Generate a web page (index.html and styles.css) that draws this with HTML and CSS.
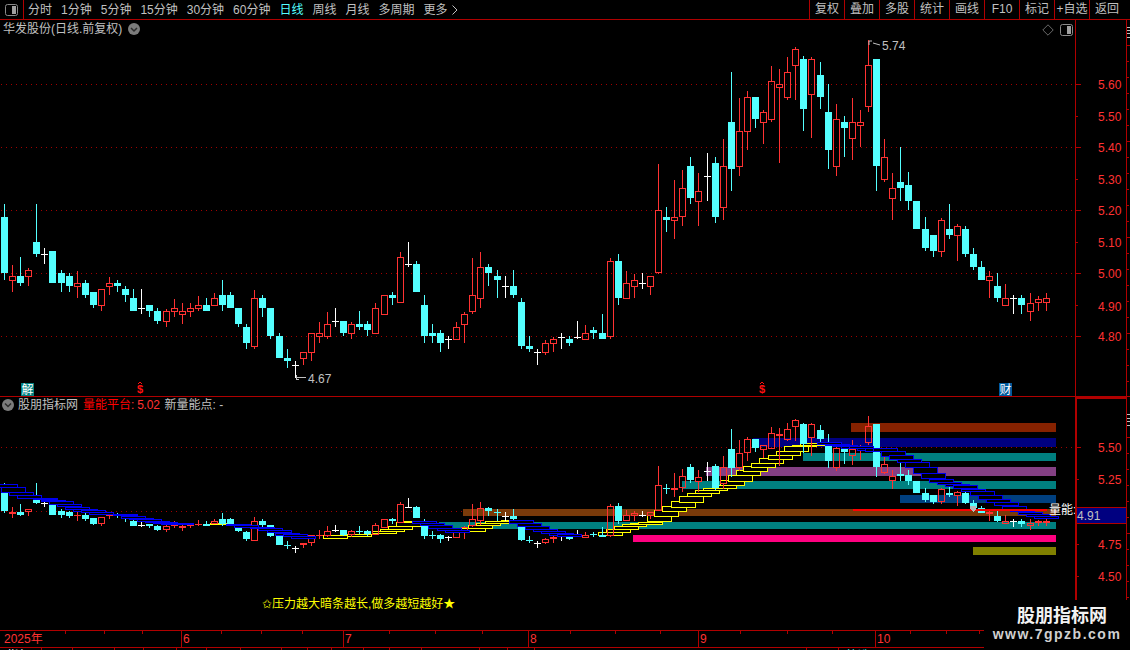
FILE: index.html
```html
<!DOCTYPE html>
<html lang="zh">
<head>
<meta charset="utf-8">
<title>华发股份</title>
<link rel="stylesheet" href="styles.css">
</head>
<body>
<div class="app">
  <header class="toolbar">
    <div class="tb-icon"><svg class="layout-icon" viewBox="0 0 13 12"><rect x="0.5" y="0.5" width="12" height="11" rx="2"/><rect class="fill" x="7" y="2" width="4" height="8"/></svg></div>
    <nav class="periods">
      <span>分时</span><span>1分钟</span><span>5分钟</span><span>15分钟</span><span>30分钟</span><span>60分钟</span><span class="active">日线</span><span>周线</span><span>月线</span><span>多周期</span><span>更多<svg class="more" viewBox="0 0 6 10"><path d="M0.5 0.5 L5 5 L0.5 9.5"/></svg></span>
    </nav>
    <div class="actions">
      <span>复权</span><span>叠加</span><span>多股</span><span>统计</span><span>画线</span><span>F10</span><span>标记</span><span>+自选</span><span>返回</span>
    </div>
  </header>

  <section class="panel upper">
    <svg id="plot-upper" class="plot" width="1075" height="376" viewBox="0 20 1075 376"></svg>
    <svg id="axis-upper" class="axis" width="55" height="376" viewBox="1075 20 55 376"></svg>
    <div class="title">
      <span>华发股份(日线.前复权)</span>
      <svg class="toggle" viewBox="0 0 12 12"><circle cx="6" cy="6" r="6"/><path d="M3 5 L6 8 L9 5"/></svg>
    </div>
    <div class="tools">
      <svg class="diamond" viewBox="0 0 12 12"><path d="M6 0.8 L11.2 6 L6 11.2 L0.8 6 Z"/></svg>
      <svg class="layout-icon" viewBox="0 0 13 12"><rect x="0.5" y="0.5" width="12" height="11" rx="2"/><rect class="fill" x="7" y="2" width="4" height="8"/></svg>
    </div>
  </section>

  <section class="panel lower">
    <svg id="plot-lower" class="plot" width="1075" height="233" viewBox="0 397 1075 233"></svg>
    <svg id="axis-lower" class="axis" width="55" height="233" viewBox="1075 397 55 233"></svg>
    <div class="title lower-title">
      <svg class="toggle" viewBox="0 0 12 12"><circle cx="6" cy="6" r="6"/><path d="M3 4.5 L6 7.5 L9 4.5"/></svg>
      <span>股朋指标网</span>
      <span class="metric"><b>量能平台</b>:&nbsp;5.02</span>
      <span>新量能点: -</span>
    </div>
  </section>

  <svg id="timeline" class="timeline" width="1130" height="16" viewBox="0 630 1130 16"></svg>

  <footer class="tabs">
    <span style="width:42px">指标</span><span style="width:31px"></span><span style="width:42px"></span><span style="width:29px"></span><span style="width:33px"></span><span style="width:30px"></span><span style="width:34px"></span><span style="width:41px"></span><span style="width:26px"></span><span style="width:24px"></span><span style="width:32px"></span><span style="width:26px"></span><span style="width:32px"></span><span style="width:58px"></span><span style="width:28px"></span><span style="width:27px"></span><span style="width:272px"></span><span style="width:32px"></span><span class="cyan" style="width:32px">筛选</span>
  </footer>

  <aside class="watermark">
    <strong>股朋指标网</strong>
    <em>www.7gpzb.com</em>
  </aside>
</div>
<script src="chart.js"></script>
</body>
</html>
```

FILE: styles.css
```css
* { box-sizing: border-box; }
html, body { margin: 0; padding: 0; background: #000; }
body { font: 12px/16px "Liberation Sans", "Noto Sans CJK SC", sans-serif; color: #c0c0c0; }
.app { position: relative; width: 1130px; height: 650px; display: flex; flex-direction: column; overflow: hidden; background: #000; }

.toolbar { display: flex; align-items: stretch; height: 20px; border-bottom: 1px solid #b00000; flex: none; }
.tb-icon { width: 24px; display: flex; align-items: center; justify-content: center; border-right: 1px solid #b00000; }
.layout-icon { width: 13px; height: 12px; display: block; }
.layout-icon rect { fill: none; stroke: #8a8a8a; }
.layout-icon .fill { fill: #a0a0a0; stroke: none; }
.periods { display: flex; gap: 9px; padding-left: 4px; align-items: center; }
.periods .active { color: #54ffff; }
.more { width: 6px; height: 10px; margin-left: 4px; vertical-align: -1px; }
.more path { fill: none; stroke: #c0c0c0; }
.actions { display: flex; margin-left: auto; margin-right: 6px; }
.actions span { width: 35px; text-align: center; border-left: 1px solid #b00000; line-height: 18px; }

.panel { position: relative; display: flex; flex: none; border-bottom: 1px solid #b00000; }
.upper { height: 377px; }
.lower { height: 234px; }
.plot, .axis { display: block; flex: none; shape-rendering: crispEdges; }
.plot text, .axis text { font: 12px "Liberation Sans", "Noto Sans CJK SC", sans-serif; shape-rendering: auto; }
.plot .dollar { font-weight: bold; font-size: 11px; }

.title { position: absolute; left: 3px; top: 1px; display: flex; align-items: center; gap: 6px; line-height: 16px; }
.toggle { width: 12px; height: 12px; display: block; }
.toggle circle { fill: #7c7c7c; }
.toggle path { fill: none; stroke: #2c2c2c; stroke-width: 1.5; }
.lower-title { left: 2px; top: 0; gap: 5px; }
.lower-title .toggle { margin-right: -1px; }
.metric { color: #ff3232; letter-spacing: -0.25px; }
.metric b { font-weight: normal; color: #ff0000; letter-spacing: 0; }

.tools { position: absolute; left: 1042px; top: 4px; display: flex; align-items: center; gap: 6px; }
.diamond { width: 12px; height: 12px; display: block; }
.diamond path { fill: none; stroke: #6a6a6a; }

.timeline { display: block; flex: none; shape-rendering: crispEdges; }
.timeline text { font: 12px "Liberation Sans", "Noto Sans CJK SC", sans-serif; }
.tabs { display: flex; height: 4px; overflow: hidden; border-top: 1px solid #b00000; flex: none; }
.tabs span { flex: none; height: 16px; padding-left: 7px; border-right: 1px solid #b00000; color: #fff; }
.tabs .cyan { color: #54ffff; border-right: 0; }

.watermark { position: absolute; left: 984px; top: 600px; width: 146px; height: 50px; background: #000; display: flex; flex-direction: column; align-items: center; }
.watermark strong { font: bold 18px/24px "Noto Sans CJK SC", sans-serif; color: #f2f2f2; margin: 2px 0 0 10px; }
.watermark em { font: bold 14px/18px "Liberation Sans", sans-serif; font-style: normal; color: #d0d0d0; letter-spacing: 1.5px; margin: -1px 0 0 0; }
```

FILE: chart.js
```js
var RED = '#ff3232', CYAN = '#54ffff', LINE = '#b00000';
var D = 'c204,217,273,280 r265,276,281,292 c257,276,283,286 r268,270,277,286 c204,242,254,257 w248,254,254,264 c251,251,283,283 c270,273,283,292 c273,276,286,292 r271,283,287,298 ' +
'c280,283,295,298 c292,292,305,308 r289,289,306,311 r277,283,287,295 c280,283,286,292 c286,289,295,302 c289,298,311,311 w289,308,308,314 c305,305,311,317 c308,311,321,324 ' +
'r309,311,322,327 r299,308,312,317 r303,311,315,324 r303,308,312,317 r296,305,309,311 c298,305,311,311 r293,298,306,306 c280,295,305,311 c292,295,308,308 c308,308,324,327 ' +
'c324,327,343,349 r290,298,347,349 c295,298,308,317 c308,308,336,339 c333,336,358,358 c349,358,361,368 w361,365,365,378 r352,352,359,365 r333,333,353,361 r322,333,337,343 ' +
'r312,324,337,339 w308,321,321,327 c321,321,333,336 r322,324,334,339 c311,324,327,330 c321,324,330,336 r303,308,334,334 r295,295,315,315 c292,295,298,305 r252,257,303,303 ' +
'w242,264,264,267 c261,264,292,292 c295,305,336,343 c324,333,336,343 c330,333,343,352 w336,339,339,349 r322,327,340,340 r312,314,325,343 r258,295,312,314 r252,267,299,308 ' +
'c264,267,273,286 c270,276,280,298 w276,286,286,298 c270,286,295,298 c298,302,346,349 c336,346,349,352 w349,352,352,365 r340,343,353,355 r337,339,344,352 w333,337,337,349 ' +
'c336,339,343,346 w321,337,337,339 r325,333,340,340 c327,330,333,339 c314,333,339,339 r258,261,337,339 c254,261,298,305 r271,283,299,299 r274,280,287,298 w273,283,283,289 ' +
'r276,276,287,295 r164,210,273,274 c207,217,220,232 r180,217,221,239 r170,188,217,226 c157,166,198,204 r173,191,202,226 w153,176,176,201 c157,163,217,223 r139,166,208,220 ' +
'c72,122,169,191 r98,131,167,176 r91,97,132,150 c97,97,119,128 r110,112,123,144 r66,81,120,122 r69,84,88,163 r57,72,98,100 r47,49,66,100 c56,59,109,131 ' +
'r57,59,95,138 c62,75,97,109 c84,112,150,169 r104,119,167,176 c116,122,128,157 r98,122,139,160 r110,122,126,147 r40,65,107,112 c59,59,166,191 r139,157,180,182 ' +
'r173,188,199,220 c147,182,188,201 c172,185,201,210 c201,201,229,229 c217,229,248,251 c235,235,251,257 r218,220,252,257 c204,229,235,239 r224,226,236,261 c226,229,254,257 ' +
'c248,254,267,270 c261,267,280,280 r271,276,281,298 c273,286,298,302 r284,298,306,306 w295,298,298,314 c295,298,305,314 r293,303,312,321 r296,299,303,311 r293,298,303,311';

var candles = D.split(' ').map(function (s, i) {
  var v = s.slice(1).split(',').map(Number);
  return { x: Math.floor(4.5 + 8.075 * i), type: s[0], h: v[0], t: v[1], b: v[2], l: v[3] };
});

function R(x, y, w, h, c) { return '<rect x="' + x + '" y="' + y + '" width="' + w + '" height="' + h + '" fill="' + c + '"/>'; }
function L(x1, y1, x2, y2, c) { return '<line x1="' + x1 + '" y1="' + y1 + '" x2="' + x2 + '" y2="' + y2 + '" stroke="' + c + '"/>'; }
function T(x, y, s, c, extra) { return '<text x="' + x + '" y="' + y + '" fill="' + c + '"' + (extra || '') + '>' + s + '</text>'; }
function dots(y, x2) { return '<line x1="1" y1="' + (y + .5) + '" x2="' + x2 + '" y2="' + (y + .5) + '" stroke="#a00000" stroke-dasharray="1 4"/>'; }

function drawCandle(k, map) {
  var col = k.type === 'c' ? CYAN : k.type === 'w' ? '#fff' : RED;
  var h = map(k.h), t = map(k.t), b = map(k.b), l = map(k.l), x = k.x, o = '';
  if (b - t <= 1) {
    o += R(x, h, 1, Math.max(l - h, 1), col) + R(x - 3, t, 7, 1, col);
  } else if (k.type === 'c') {
    if (t > h) o += R(x, h, 1, t - h, col);
    if (l > b) o += R(x, b, 1, l - b, col);
    o += R(x - 3, t, 7, b - t, col);
  } else {
    if (t > h) o += R(x, h, 1, t - h, col);
    if (l > b) o += R(x, b, 1, l - b, col);
    o += '<rect x="' + (x - 2.5) + '" y="' + (t + .5) + '" width="6" height="' + (b - t - 1) + '" fill="none" stroke="' + col + '"/>';
  }
  return o;
}

function badge(x, y, s, bg) { return R(x, y, 13, 13, bg) + T(x + .5, y + 11, s, '#fff'); }
function dollar(x) { return '<path d="M' + (x - 2) + ' 384 L' + x + ' 382 L' + (x + 2) + ' 384" fill="none" stroke="#ff1010"/>' + T(x - 3, 393, '$', '#ff1010', ' class="dollar"'); }

/* upper panel */
var up = '';
[84, 147, 210, 273, 336].forEach(function (y) { up += dots(y, 1075); });
candles.forEach(function (k) { up += drawCandle(k, function (v) { return v; }); });
up += '<path d="M869 41 h3 M869 41 v4 M873 43 L880 45" stroke="#c0c0c0" fill="none" style="shape-rendering:auto"/>' + T(882, 50, '5.74', '#c0c0c0');
up += '<path d="M296 377 h10 M296 375 v5 M297 379 h2" stroke="#c0c0c0" fill="none"/>' + T(308, 383, '4.67', '#c0c0c0');
up += badge(21, 383, '解', '#008080') + dollar(140) + dollar(762) + badge(999, 383, '财', '#005a9c');
document.getElementById('plot-upper').innerHTML = up;

/* lower panel */
var low = '';
[447, 511].forEach(function (y) { low += dots(y, 1075); });
[[851, 423, 9, '#862200'], [753, 438, 9, '#000080'], [803, 453, 8, '#008080'], [706, 467, 9, '#844084'], [682, 481, 8, '#008080'],
 [900, 495, 8, '#004080'], [463, 509, 7, '#7a3a0a'], [439, 522, 7, '#008080'], [633, 535, 7, '#ff0080'], [973, 547, 8, '#808000']
].forEach(function (b) { low += R(b[0], b[1], 1056 - b[0], b[2], b[3]); });

function boxes(list, ox, oy, col) {
  var o = '';
  list.forEach(function (b) {
    var x = Math.round(ox + b[0] / 3), y = Math.round(oy + b[1] / 3), h = Math.max(Math.round((b[2] - b[1]) / 3), 1), w = b[3] || 24;
    o += '<rect x="' + (x + .5) + '" y="' + (y + .5) + '" width="' + w + '" height="' + h + '" fill="#000" stroke="' + col + '"/>';
  });
  return o;
}
var YEL = '#ffff00', BLU = '#0000f0';
low += boxes([[100, 136, 144], [172, 131, 136], [245, 124, 131], [270, 118, 124], [295, 109, 118], [319, 97, 109], [343, 94, 97],
  [513, 114, 124], [534, 106, 114], [558, 100, 106], [585, 94, 100], [633, 90, 94], [924, 127, 136], [948, 118, 127], [972, 108, 118], [996, 102, 108], [1020, 100, 104]], 290, 490, YEL);
low += boxes([[55, 335, 342], [80, 316, 335], [102, 300, 317], [127, 288, 302], [152, 273, 290], [177, 258, 275], [202, 250, 260], [226, 240, 250], [250, 234, 241], [275, 226, 236],
  [299, 211, 226], [323, 195, 212], [347, 180, 196], [370, 168, 182], [394, 159, 170], [418, 145, 160], [443, 135, 146], [468, 123, 136], [493, 109, 124], [516, 104, 108], [540, 98, 104]], 620, 410, YEL);
low += boxes([[630, 444, 447, 16]], 0, 375, YEL);
candles.forEach(function (k) { low += drawCandle(k, function (v) { return Math.round(400 + .405 * v); }); });
low += boxes([[-22, 327, 337], [3, 337, 351], [27, 351, 360], [51, 361, 370], [99, 370, 374], [123, 374, 378], [147, 378, 388], [171, 388, 395], [195, 395, 401], [219, 401, 406], [243, 406, 412], [267, 412, 418],
  [340, 418, 422], [364, 422, 428], [388, 428, 431], [412, 431, 437], [436, 437, 441], [460, 441, 444], [484, 444, 445], [508, 445, 447],
  [678, 447, 450], [702, 450, 456], [750, 456, 460], [775, 460, 466], [800, 466, 473], [824, 473, 478], [848, 478, 484], [872, 484, 491]], 0, 375, BLU);
low += boxes([[3, 139, 146], [366, 94, 100], [390, 100, 106], [415, 106, 115], [440, 115, 120], [465, 120, 125], [658, 90, 100], [682, 100, 108], [706, 108, 118], [730, 118, 124], [754, 124, 131], [778, 128, 134], [802, 131, 137]], 290, 490, BLU);
low += boxes([[590, 97, 103], [614, 103, 107], [638, 105, 108], [662, 107, 112], [686, 109, 115], [710, 113, 120], [735, 113, 122], [759, 114, 123], [783, 122, 137], [807, 136, 149], [831, 148, 157], [856, 157, 172], [880, 172, 190], [904, 190, 206],
  [928, 206, 215], [952, 215, 221], [976, 221, 227], [1000, 226, 236], [1024, 236, 243], [1050, 243, 256], [1075, 256, 268], [1098, 268, 277], [1122, 277, 287], [1147, 287, 298], [1171, 298, 305], [1195, 305, 312], [1219, 312, 317], [1243, 317, 322]], 620, 410, BLU);
low += R(853, 509, 194, 2, '#ff0000');
low += '<path d="M970 506 h6 v3 l-3 3 l-3 -3 z" fill="#b8b8b8"/>';
low += T(1049, 514, '量能:', '#fff');
low += T(262, 608, '✩压力越大暗条越长,做多越短越好★', '#ffff00');
document.getElementById('plot-lower').innerHTML = low;

/* axes */
function ruler(y0, y1, first, whiteTop) {
  var o = L(1126.5, y0, 1126.5, y1, LINE);
  for (var y = first, n = 0; y < y1; y += 16, n++) {
    var long = n % 6 === 0;
    o += R(1127, y, long ? 3 : 2, 1, LINE);
  }
  whiteTop.forEach(function (y) { o += R(1127, y, 3, 1, '#c0c0c0'); });
  return o;
}
var au = L(1075.5, 20, 1075.5, 396, LINE) + ruler(20, 396, 45, [27, 30, 33, 37]);
[['5.60', 84, 1, 85], ['5.50', 116, 0, 117], ['5.40', 147, 1, 148], ['5.30', 179, 0, 180], ['5.20', 210, 1, 211], ['5.10', 242, 0, 243], ['5.00', 273, 1, 274], ['4.90', 305, 0, 307], ['4.80', 336, 1, 337]].forEach(function (a) {
  au += R(1076, a[1], a[2] ? 5 : 2, 1, LINE) + T(1098, a[3] + 4, a[0], RED);
});
document.getElementById('axis-upper').innerHTML = au;

var al = R(1075, 397, 2, 233, LINE) + R(1075, 397, 51, 2, LINE) + ruler(397, 630, 437, [414, 418, 421, 425]);
[['5.50', 447, 1], ['5.25', 479, 0], ['4.75', 544, 0], ['4.50', 576, 0]].forEach(function (a) {
  al += R(1077, a[1], a[2] ? 4 : 2, 1, LINE) + T(1098, a[1] + 5, a[0], RED);
});
al += R(1077, 507, 49, 17, '#000080') + R(1077, 507, 49, 1, LINE) + R(1077, 523, 49, 1, LINE) + T(1077, 520, '4.91', '#c0c0c0');
document.getElementById('axis-lower').innerHTML = al;

/* time axis */
var tl = '';
[65, 104, 142, 221, 261, 302, 389, 435, 482, 570, 615, 660, 740, 787, 832, 910, 946, 979].forEach(function (x) { tl += R(x, 630, 1, 3, LINE); });
[[181, '6'], [343, '7'], [528, '8'], [698, '9'], [875, '10']].forEach(function (m) {
  tl += R(m[0], 630, 1, 16, LINE) + T(m[0] + 2, 642, m[1], RED);
});
tl += T(4, 642, '2025年', RED);
document.getElementById('timeline').innerHTML = tl;
```
